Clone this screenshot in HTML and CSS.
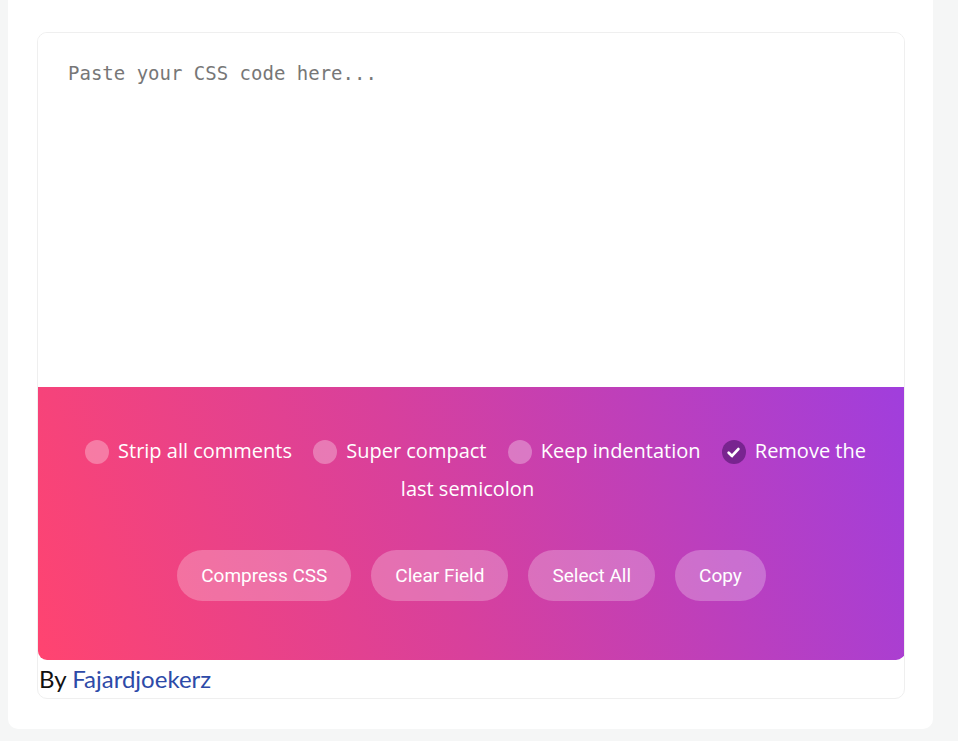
FILE: index.html
```html
<!DOCTYPE html>
<html lang="en">
<head>
    <meta charset="UTF-8">
    <meta name="viewport" content="width=device-width, initial-scale=1.0">
    <title>CSS Compressor</title>
    <link rel="stylesheet" href="styles.css">
</head>
<body>
    <div class="card">
        <div class="tool">
            <textarea class="code" placeholder="Paste your CSS code here..."></textarea>
            <div class="panel">
                <div class="options">
                    <label class="option"><span class="check"></span>Strip all comments</label>
                    <label class="option"><span class="check"></span>Super compact</label>
                    <label class="option"><span class="check"></span>Keep indentation</label>
                    <label class="option"><span class="check checked"><svg width="15" height="15" viewBox="0 0 14 14"><path d="M2.5 7.3 L5.6 10.2 L11.5 3.8" fill="none" stroke="#fff" stroke-width="2.6" stroke-linecap="round" stroke-linejoin="round"/></svg></span>Remove the last semicolon</label>
                </div>
                <div class="buttons">
                    <button class="btn">Compress CSS</button>
                    <button class="btn">Clear Field</button>
                    <button class="btn">Select All</button>
                    <button class="btn">Copy</button>
                </div>
            </div>
            <div class="credit">By <a href="#">Fajardjoekerz</a></div>
        </div>
    </div>
</body>
</html>
```

FILE: styles.css
```css
body {
    margin: 0;
    padding: 0 25px 12px 8px;
    background: #f5f6f6;
    font-family: 'Open Sans', sans-serif;
}

.card {
    background: white;
    border-radius: 0 0 10px 10px;
    padding: 32px 28px 30px 29px;
}

.tool {
    border: 1px solid #efefef;
    border-radius: 10px;
    overflow: hidden;
}

.code {
    display: block;
    width: 100%;
    height: 354px;
    box-sizing: border-box;
    border: none;
    outline: none;
    resize: none;
    padding: 29px 30px;
    font-family: 'DejaVu Sans Mono', monospace;
    font-size: 19px;
    color: #333;
    background: white;
}

.code::placeholder {
    color: #777;
}

.panel {
    background: linear-gradient(70deg, #ff4470 0%, #d8409c 45%, #a03edd 100%);
    border-radius: 0 0 9px 9px;
    padding: 45px 30px 59px;
    margin-right: -1px;
}

.options {
    color: white;
    font-size: 20px;
    line-height: 38px;
    text-align: center;
}

.option {
    margin: 0 8px;
}

.check {
    display: inline-block;
    width: 24px;
    height: 24px;
    border-radius: 50%;
    background: rgba(255, 255, 255, 0.3);
    vertical-align: -6px;
    margin-right: 9px;
}

.check svg {
    display: block;
    margin: 5px auto 0;
}

.check.checked {
    background: rgba(60, 10, 90, 0.5);
}

.buttons {
    display: flex;
    justify-content: center;
    gap: 20px;
    margin-top: 42px;
}

.btn {
    font-family: 'Roboto', sans-serif;
    font-size: 19px;
    color: white;
    background: rgba(255, 255, 255, 0.25);
    border: none;
    border-radius: 30px;
    height: 51px;
    padding: 0 24px;
    cursor: pointer;
}

.credit {
    font-family: 'Lato', sans-serif;
    font-size: 24px;
    line-height: 38px;
    color: #111;
    padding-left: 1px;
}

.credit a {
    color: #2d4aa8;
    text-decoration: none;
}
```
